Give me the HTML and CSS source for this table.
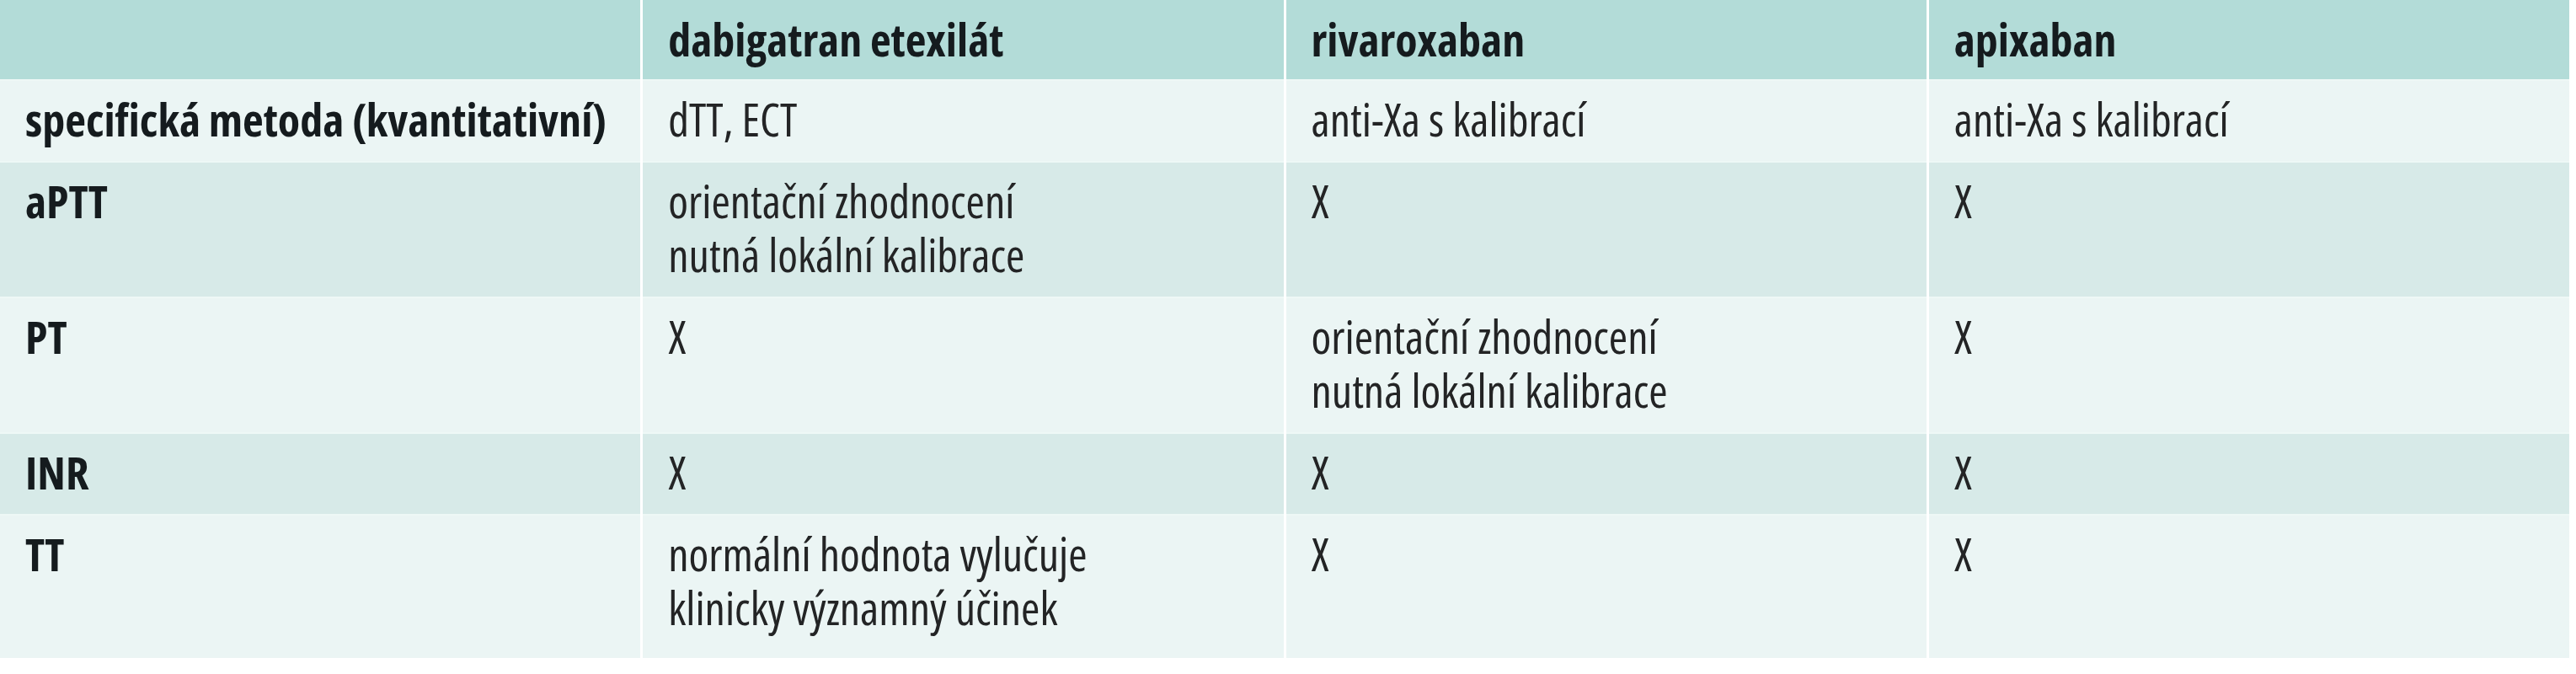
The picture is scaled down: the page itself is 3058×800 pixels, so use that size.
FILE: index.html
```html
<!DOCTYPE html>
<html lang="cs">
<head>
<meta charset="utf-8">
<title>Tabulka</title>
<link rel="stylesheet" href="styles.css">
</head>
<body>
<div class="table">
  <div class="cell head"></div>
  <div class="cell head">dabigatran etexilát</div>
  <div class="cell head">rivaroxaban</div>
  <div class="cell head">apixaban</div>

  <div class="cell light label">specifická metoda (kvantitativní)</div>
  <div class="cell light">dTT, ECT</div>
  <div class="cell light">anti-Xa s kalibrací</div>
  <div class="cell light">anti-Xa s kalibrací</div>

  <div class="cell dark label">aPTT</div>
  <div class="cell dark">orientační zhodnocení<br>nutná lokální kalibrace</div>
  <div class="cell dark">X</div>
  <div class="cell dark">X</div>

  <div class="cell light label">PT</div>
  <div class="cell light">X</div>
  <div class="cell light">orientační zhodnocení<br>nutná lokální kalibrace</div>
  <div class="cell light">X</div>

  <div class="cell dark label">INR</div>
  <div class="cell dark">X</div>
  <div class="cell dark">X</div>
  <div class="cell dark">X</div>

  <div class="cell light label last">TT</div>
  <div class="cell light last">normální hodnota vylučuje<br>klinicky významný účinek</div>
  <div class="cell light last">X</div>
  <div class="cell light last">X</div>
</div>
</body>
</html>
```
FILE: styles.css
```css
html, body {
  margin: 0;
  padding: 0;
  background: #ffffff;
}
body {
  padding: 0 8px 0 0;
  font-family: "Open Sans", "Noto Sans", sans-serif;
  font-stretch: 75%;
  font-size: 54px;
  line-height: 64px;
  color: #232425;
}
.table {
  display: grid;
  grid-template-columns: repeat(4, 1fr);
  column-gap: 3px;
}
.cell {
  padding: 13px 30px 18px 30px;
  white-space: nowrap;
  border-top: 2px solid #eef8f6;
}
.head {
  background: #b3dcd8;
  font-weight: 700;
  color: #151b1e;
  padding-top: 14px;
  padding-bottom: 16px;
  border-top: 0;
}
.light {
  background: #ebf5f4;
}
.dark {
  background: #d7eae8;
}
.label {
  font-weight: 700;
  color: #151b1e;
}
.last {
  padding-bottom: 28px;
}
```
